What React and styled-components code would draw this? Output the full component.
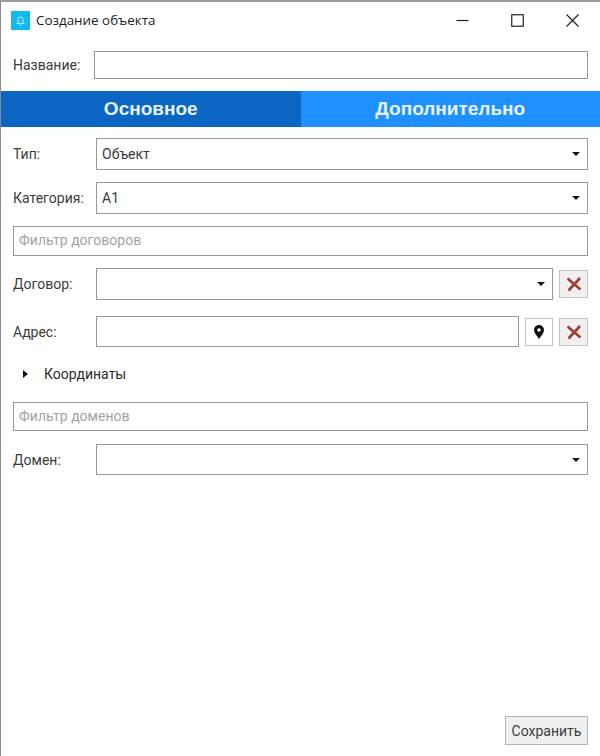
import styled, { createGlobalStyle } from 'styled-components';

const GlobalStyle = createGlobalStyle`
  html, body {
    margin: 0;
    padding: 0;
    background: #fff;
  }
`;

const Window = styled.div`
  width: 600px;
  height: 756px;
  box-sizing: border-box;
  display: flex;
  flex-direction: column;
  background: #fff;
  border-top: 2px solid #9a9a9a;
  border-left: 1px solid #8a8a8a;
  font-family: Roboto, "Liberation Sans", sans-serif;
  font-size: 14px;
  color: #333;
`;

const TitleBar = styled.div`
  height: 36px;
  display: flex;
  align-items: center;
  padding-left: 10px;
  flex-shrink: 0;
`;

const AppIcon = styled.div`
  width: 19px;
  height: 19px;
  background: #12b9ee;
  display: flex;
  align-items: center;
  justify-content: center;
`;

const Title = styled.span`
  margin-left: 6px;
  font-family: "Open Sans", sans-serif;
  font-size: 13.4px;
  color: #1c1c1c;
`;

const WindowButtons = styled.div`
  margin-left: auto;
  display: flex;
`;

const WindowButton = styled.div`
  width: 55px;
  height: 36px;
  display: flex;
  align-items: center;
  justify-content: center;
`;

const NameRow = styled.div`
  display: flex;
  align-items: center;
  padding: 13px 12px 12px 12px;
`;

const NameLabel = styled.label`
  width: 81px;
  flex-shrink: 0;
  color: #3c3c3c;
`;

const Tabs = styled.div`
  display: flex;
  height: 36px;
  flex-shrink: 0;
`;

const Tab = styled.div`
  flex: 1;
  display: flex;
  align-items: center;
  justify-content: center;
  background: ${(p) => (p.$active ? '#0a66c2' : '#1e90ff')};
  color: #e8f3ff;
  font-family: "Liberation Sans", sans-serif;
  font-weight: 700;
  font-size: 19px;
`;

const Form = styled.div`
  flex: 1;
  display: flex;
  flex-direction: column;
  padding: 11px 12px 11px 12px;
`;

const Row = styled.div`
  display: flex;
  align-items: center;
  gap: 6px;
  margin-bottom: ${(p) => p.$mb ?? 12}px;
`;

const Label = styled.label`
  width: 77px;
  flex-shrink: 0;
  color: #3c3c3c;
`;

const Field = styled.div`
  flex: 1;
  min-width: 0;
  height: ${(p) => p.$h ?? 32}px;
  box-sizing: border-box;
  display: flex;
  align-items: center;
  padding: 0 6px ${(p) => (p.$placeholder ? 2 : 0)}px 5px;
  border: 1px solid #999;
  background: #fff;
  color: ${(p) => (p.$placeholder ? '#a3a3a3' : '#3a3a3a')};
`;

const Caret = styled.span`
  margin-left: auto;
  margin-right: 1px;
  width: 0;
  height: 0;
  border-left: 4px solid transparent;
  border-right: 4px solid transparent;
  border-top: 4px solid #111;
`;

const IconButton = styled.button`
  width: ${(p) => p.$w ?? 29}px;
  height: 28px;
  padding: 0;
  flex-shrink: 0;
  display: flex;
  align-items: center;
  justify-content: center;
  border: 1px solid #c4c4c4;
  background: ${(p) => (p.$muted ? '#f0f0f0' : '#fff')};
`;

const Expander = styled.div`
  display: flex;
  align-items: center;
  height: 30px;
  margin-top: 1px;
  margin-bottom: 13px;
  color: #2c2c2c;
`;

const ExpanderArrow = styled.span`
  margin-left: 10px;
  margin-right: 16px;
  width: 0;
  height: 0;
  border-top: 4px solid transparent;
  border-bottom: 4px solid transparent;
  border-left: 5px solid #111;
`;

const Footer = styled.div`
  margin-top: auto;
  display: flex;
  justify-content: flex-end;
`;

const SaveButton = styled.button`
  width: 83px;
  height: 29px;
  padding: 0;
  border: 1px solid #b4b4b4;
  background: #f0f0f0;
  color: #3c3c3c;
  font-family: Roboto, "Liberation Sans", sans-serif;
  font-size: 14px;
`;

const CrossIcon = () => (
  <svg width="16" height="16" viewBox="0 0 16 16">
    <path d="M1.5 2.5 L14.5 13.5 M14 2 L2.5 14.5" stroke="#a33a2e" strokeWidth="2.6" fill="none" />
  </svg>
);

const PinIcon = () => (
  <svg width="10" height="14" viewBox="0 0 10 14">
    <path
      fillRule="evenodd"
      fill="#111"
      d="M5 0 C2.2 0 0 2.2 0 5 C0 8 3 11 5 14 C7 11 10 8 10 5 C10 2.2 7.8 0 5 0 Z M5 3.2 A1.8 1.8 0 1 1 5 6.8 A1.8 1.8 0 1 1 5 3.2 Z"
    />
  </svg>
);

const App = () => (
  <>
    <GlobalStyle />
    <Window>
      <TitleBar>
        <AppIcon>
          <svg width="11" height="11" viewBox="0 0 11 11" fill="none" stroke="#bdeefc" strokeWidth="1">
            <path d="M3 8 V4.5 a2.5 2.5 0 0 1 5 0 V8 M1.5 8.5 h8 M4.5 10 h2" />
          </svg>
        </AppIcon>
        <Title>Создание объекта</Title>
        <WindowButtons>
          <WindowButton>
            <svg width="13" height="13" viewBox="0 0 13 13">
              <path d="M0.5 6.5 H12.5" stroke="#222" strokeWidth="1.2" />
            </svg>
          </WindowButton>
          <WindowButton>
            <svg width="13" height="13" viewBox="0 0 13 13" fill="none">
              <rect x="0.75" y="0.75" width="11.5" height="11.5" stroke="#222" strokeWidth="1.2" />
            </svg>
          </WindowButton>
          <WindowButton>
            <svg width="13" height="13" viewBox="0 0 13 13">
              <path d="M0.5 0.5 L12.5 12.5 M12.5 0.5 L0.5 12.5" stroke="#222" strokeWidth="1.2" />
            </svg>
          </WindowButton>
        </WindowButtons>
      </TitleBar>

      <NameRow>
        <NameLabel>Название:</NameLabel>
        <Field $h={28} />
      </NameRow>

      <Tabs>
        <Tab $active>Основное</Tab>
        <Tab>Дополнительно</Tab>
      </Tabs>

      <Form>
        <Row>
          <Label>Тип:</Label>
          <Field>Объект<Caret /></Field>
        </Row>
        <Row>
          <Label>Категория:</Label>
          <Field>А1<Caret /></Field>
        </Row>
        <Row>
          <Field $h={30} $placeholder>Фильтр договоров</Field>
        </Row>
        <Row $mb={16}>
          <Label>Договор:</Label>
          <Field><Caret /></Field>
          <IconButton $muted><CrossIcon /></IconButton>
        </Row>
        <Row $mb={11}>
          <Label>Адрес:</Label>
          <Field $h={31} />
          <IconButton $w={28}><PinIcon /></IconButton>
          <IconButton $muted><CrossIcon /></IconButton>
        </Row>
        <Expander>
          <ExpanderArrow />
          Координаты
        </Expander>
        <Row $mb={13}>
          <Field $h={29} $placeholder>Фильтр доменов</Field>
        </Row>
        <Row>
          <Label>Домен:</Label>
          <Field $h={31}><Caret /></Field>
        </Row>
        <Footer>
          <SaveButton>Сохранить</SaveButton>
        </Footer>
      </Form>
    </Window>
  </>
);

export default App;
